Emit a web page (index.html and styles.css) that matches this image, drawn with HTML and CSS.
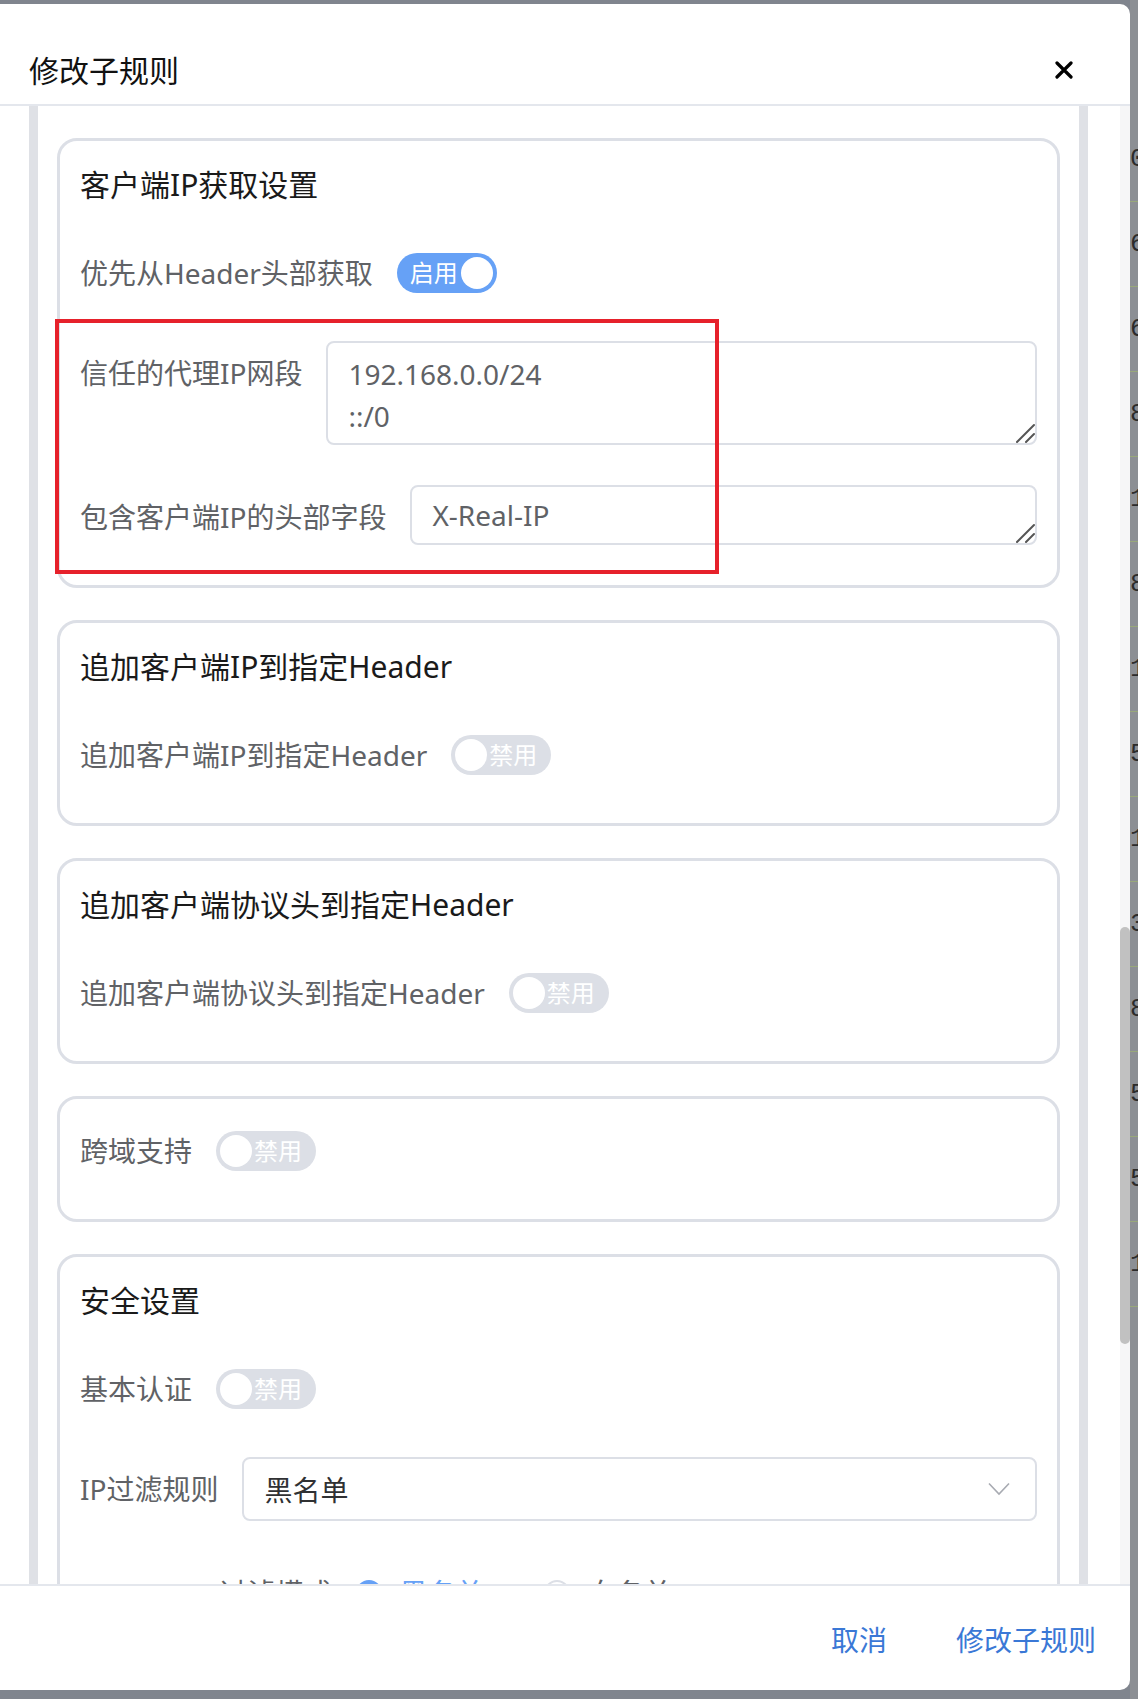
FILE: index.html
```html
<!DOCTYPE html>
<html lang="zh-CN">
<head>
<meta charset="utf-8">
<title>修改子规则</title>
<link rel="stylesheet" href="styles.css">
</head>
<body>
<div class="stage">
  <div class="dialog">
    <div class="dlg-header">
      <span class="dlg-title">修改子规则</span>
      <svg class="dlg-close" width="18" height="18" viewBox="0 0 18 18"><path d="M2 2 L16 16 M16 2 L2 16" stroke="#000" stroke-width="3.2" stroke-linecap="round"/></svg>
    </div>
    <div class="dlg-body">
      <div class="body-main">
        <div class="wrap">
          <section class="card">
            <div class="card-title">客户端IP获取设置</div>
            <div class="item">
              <span class="lbl">优先从Header头部获取</span>
              <span class="switch on"><span class="sw-text">启用</span><span class="knob"></span></span>
            </div>
            <div class="item top mb40">
              <span class="lbl">信任的代理IP网段</span>
              <div class="ta-box">
                <textarea class="ta ta-2">192.168.0.0/24
::/0</textarea>
                <svg class="grip" width="20" height="20" viewBox="0 0 20 20"><path d="M2 19 L19 2 M11 19 L19 11" stroke="#555" stroke-width="2" stroke-linecap="round"/></svg>
              </div>
            </div>
            <div class="item top">
              <span class="lbl">包含客户端IP的头部字段</span>
              <div class="ta-box">
                <textarea class="ta ta-1">X-Real-IP</textarea>
                <svg class="grip" width="20" height="20" viewBox="0 0 20 20"><path d="M2 19 L19 2 M11 19 L19 11" stroke="#555" stroke-width="2" stroke-linecap="round"/></svg>
              </div>
            </div>
          </section>

          <section class="card">
            <div class="card-title">追加客户端IP到指定Header</div>
            <div class="item">
              <span class="lbl">追加客户端IP到指定Header</span>
              <span class="switch off"><span class="knob"></span><span class="sw-text">禁用</span></span>
            </div>
          </section>

          <section class="card">
            <div class="card-title">追加客户端协议头到指定Header</div>
            <div class="item">
              <span class="lbl">追加客户端协议头到指定Header</span>
              <span class="switch off"><span class="knob"></span><span class="sw-text">禁用</span></span>
            </div>
          </section>

          <section class="card">
            <div class="item">
              <span class="lbl">跨域支持</span>
              <span class="switch off"><span class="knob"></span><span class="sw-text">禁用</span></span>
            </div>
          </section>

          <section class="card">
            <div class="card-title">安全设置</div>
            <div class="item">
              <span class="lbl">基本认证</span>
              <span class="switch off"><span class="knob"></span><span class="sw-text">禁用</span></span>
            </div>
            <div class="item mb40">
              <span class="lbl">IP过滤规则</span>
              <div class="select">
                <span>黑名单</span>
                <svg width="22" height="14" viewBox="0 0 22 14"><path d="M1 1.5 L11 12 L21 1.5" fill="none" stroke="#a8abb2" stroke-width="1.6"/></svg>
              </div>
            </div>
            <div class="item">
              <span class="lbl">UserAgent过滤模式</span>
              <span class="radio checked"><span class="dot"></span><span class="r-text">黑名单</span></span>
              <span class="radio"><span class="dot"></span><span class="r-text">白名单</span></span>
            </div>
            <div class="item">
              <span class="lbl">UserAgent</span>
            </div>
          </section>
        </div>
      </div>
      <div class="scroll-track"><div class="scroll-thumb"></div></div>
    </div>
    <div class="dlg-footer">
      <span class="btn">取消</span>
      <span class="btn">修改子规则</span>
    </div>
  </div>
  <div class="peek">
    <div>0</div><div>6</div><div>6</div><div>8</div><div>1</div><div>8</div><div>1</div><div>5</div><div>1</div><div>3</div><div>8</div><div>5</div><div>5</div><div>1</div>
  </div>
  <div class="annot"></div>
</div>
</body>
</html>
```

FILE: styles.css
```css
html, body {
  margin: 0;
  padding: 0;
}
body {
  font-family: "Noto Sans", "Noto Sans CJK SC", sans-serif;
  background: #80858e;
}
.stage {
  position: relative;
  display: flex;
  width: 1138px;
  height: 1699px;
  overflow: hidden;
  background: #80858e;
}
.dialog {
  flex: none;
  width: 1130px;
  height: 1686px;
  margin-top: 4px;
  background: #fff;
  border-radius: 0 10px 10px 0;
  display: flex;
  flex-direction: column;
  overflow: hidden;
}
.dlg-header {
  flex: none;
  height: 100px;
  border-bottom: 2px solid #e4e7ed;
  display: flex;
  align-items: flex-start;
  justify-content: space-between;
  padding: 0 57px 0 29px;
}
.dlg-title {
  margin-top: 43px;
  font-size: 30px;
  line-height: 48px;
  color: #111;
}
.dlg-close {
  margin-top: 57px;
}
.dlg-body {
  flex: none;
  height: 1478px;
  display: flex;
  overflow: hidden;
}
.body-main {
  flex: 1;
  padding: 0 32px 0 29px;
  overflow: hidden;
}
.wrap {
  border-left: 9px solid #dfe1e6;
  border-right: 9px solid #dfe1e6;
  padding: 32px 19px 0 19px;
  display: flex;
  flex-direction: column;
  gap: 32px;
}
.card {
  border: 3px solid #dcdfe6;
  border-radius: 20px;
  padding: 20px 20px 0 20px;
  background: #fff;
}
.card-title {
  font-size: 30px;
  line-height: 48px;
  color: #1a1a1a;
  margin-bottom: 32px;
}
.item {
  display: flex;
  align-items: center;
  min-height: 64px;
  margin-bottom: 36px;
}
.item.top {
  align-items: flex-start;
}
.item.mb40 {
  margin-bottom: 40px;
}
.lbl {
  flex: none;
  font-size: 28px;
  line-height: 64px;
  color: #606266;
  padding-right: 24px;
  white-space: nowrap;
}
.ta-box {
  position: relative;
  flex: 1;
}
.ta {
  display: block;
  width: 100%;
  box-sizing: border-box;
  border: 2px solid #dcdfe6;
  border-radius: 8px;
  padding: 10px 20px;
  font-family: "Noto Sans", "Noto Sans CJK SC", sans-serif;
  font-size: 28px;
  line-height: 42px;
  color: #606266;
  resize: none;
  overflow: hidden;
  outline: none;
  margin: 0;
}
.ta-2 {
  height: 104px;
}
.ta-1 {
  height: 60px;
  padding: 7px 20px;
}
.grip {
  position: absolute;
  right: 2px;
  bottom: 2px;
}
.switch {
  flex: none;
  display: inline-flex;
  align-items: center;
  box-sizing: border-box;
  width: 100px;
  height: 40px;
  border-radius: 20px;
  padding: 4px;
}
.switch.on {
  background: #66a1f6;
  justify-content: space-between;
  padding-left: 13px;
}
.switch.off {
  background: #dcdfe6;
}
.knob {
  flex: none;
  width: 32px;
  height: 32px;
  border-radius: 50%;
  background: #fff;
}
.sw-text {
  font-size: 24px;
  line-height: 32px;
  color: #fff;
  white-space: nowrap;
}
.switch.off .sw-text {
  margin-left: 2px;
}
.select {
  flex: 1;
  height: 64px;
  box-sizing: border-box;
  border: 2px solid #dcdfe6;
  border-radius: 8px;
  display: flex;
  align-items: center;
  justify-content: space-between;
  padding: 0 25px 0 20px;
  font-size: 28px;
  color: #303133;
}
.radio {
  display: inline-flex;
  align-items: center;
  margin-right: 60px;
}
.radio .dot {
  width: 26px;
  height: 26px;
  box-sizing: border-box;
  border-radius: 50%;
  border: 2px solid #dcdfe6;
  background: #fff;
  margin-right: 18px;
}
.radio.checked .dot {
  border-color: #66a1f6;
  background: #66a1f6;
}
.r-text {
  font-size: 28px;
  line-height: 64px;
  color: #606266;
}
.radio.checked .r-text {
  color: #66a1f6;
}
.scroll-track {
  flex: none;
  width: 10px;
  background: #f6f6f7;
}
.scroll-thumb {
  margin-top: 821px;
  height: 417px;
  border-radius: 5px;
  background: #c1c1c1;
}
.dlg-footer {
  flex: none;
  height: 104px;
  border-top: 2px solid #e4e7ed;
  display: flex;
  justify-content: flex-end;
  align-items: flex-start;
  gap: 69px;
  padding: 30px 34px 0 0;
}
.btn {
  font-size: 28px;
  line-height: 48px;
  color: #3a78d6;
}
.peek {
  flex: 1;
  overflow: hidden;
  background: #8c8f94;
  padding-top: 117px;
}
.peek div {
  height: 84px;
  border-bottom: 1px solid #98a87a;
  font-family: "Liberation Mono", monospace;
  font-size: 26px;
  line-height: 84px;
  color: #2b2b2b;
  white-space: nowrap;
}
.annot {
  position: absolute;
  left: 55px;
  top: 319px;
  width: 664px;
  height: 255px;
  box-sizing: border-box;
  border: 4px solid #e6212b;
}
```
